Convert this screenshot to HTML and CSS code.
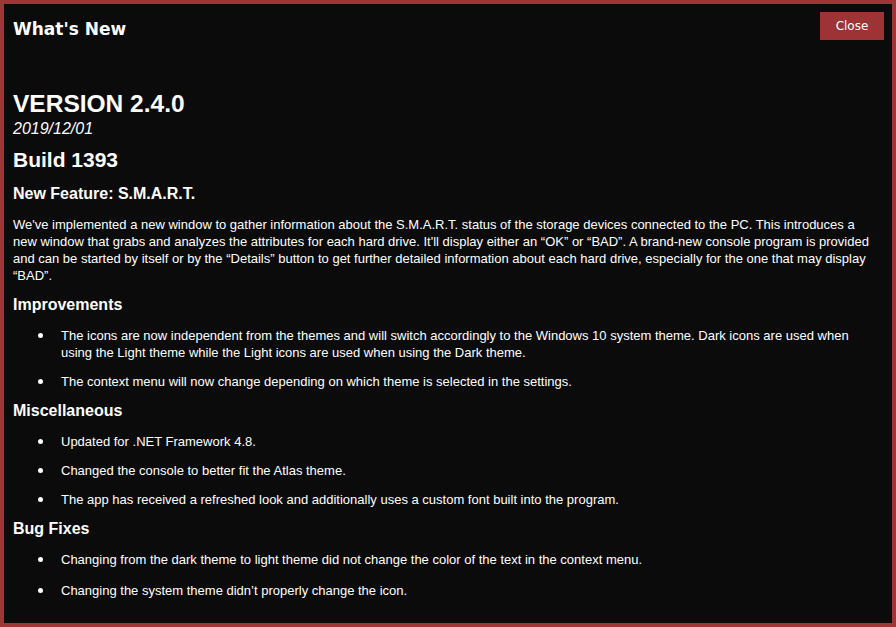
FILE: index.html
```html
<!DOCTYPE html>
<html lang="en">
    <head>
        <title>What's New</title>
        <link rel="stylesheet" href="styles.css">
    </head>
    <body>
        <div id="window">
            <div class="header">
                <h1 class="title">What's New</h1>
                <button class="close">Close</button>
            </div>

            <div id="notes">
                <h2 class="version">VERSION 2.4.0</h2>
                <div class="date">2019/12/01</div>
                <h3 class="build">Build 1393</h3>

                <h4 class="feature">New Feature: S.M.A.R.T.</h4>
                <p>We've implemented a new window to gather information about the S.M.A.R.T. status of the storage devices connected to the PC. This introduces a new window that grabs and analyzes the attributes for each hard drive. It'll display either an &ldquo;OK&rdquo; or &ldquo;BAD&rdquo;. A brand-new console program is provided and can be started by itself or by the &ldquo;Details&rdquo; button to get further detailed information about each hard drive, especially for the one that may display &ldquo;BAD&rdquo;.</p>

                <h4>Improvements</h4>
                <ul>
                    <li>The icons are now independent from the themes and will switch accordingly to the Windows 10 system theme. Dark icons are used when using the Light theme while the Light icons are used when using the Dark theme.</li>
                    <li>The context menu will now change depending on which theme is selected in the settings.</li>
                </ul>

                <h4>Miscellaneous</h4>
                <ul>
                    <li>Updated for .NET Framework 4.8.</li>
                    <li>Changed the console to better fit the Atlas theme.</li>
                    <li>The app has received a refreshed look and additionally uses a custom font built into the program.</li>
                </ul>

                <h4>Bug Fixes</h4>
                <ul class="fixes">
                    <li>Changing from the dark theme to light theme did not change the color of the text in the context menu.</li>
                    <li>Changing the system theme didn&rsquo;t properly change the icon.</li>
                </ul>
            </div>
        </div>
    </body>
</html>
```

FILE: styles.css
```css
html, body{
    margin:0;
    background-color:#0b0b0b;
}
body{
    font-family:"Liberation Sans", Arial, sans-serif;
    color:#ffffff;
}
#window{
    width:896px;
    height:627px;
    box-sizing:border-box;
    border:4px solid #9f3537;
    background-color:#0b0b0b;
    overflow:hidden;
}
.header{
    display:flex;
    justify-content:space-between;
    align-items:flex-start;
    padding:8px 8px 0 9px;
}
.title{
    font-family:"DejaVu Sans", Verdana, sans-serif;
    font-size:17px;
    line-height:22px;
    font-weight:bold;
    margin:6px 0 0 0;
}
.close{
    width:64px;
    height:28px;
    border:none;
    padding:0;
    background-color:#9d3335;
    color:#ffffff;
    font-family:"DejaVu Sans", Verdana, sans-serif;
    font-size:12px;
}
#notes{
    padding:50px 13px 0 9px;
}
.version{
    font-size:24.5px;
    line-height:28px;
    font-weight:bold;
    margin:0;
}
.date{
    font-size:16px;
    line-height:18px;
    font-style:italic;
    margin-top:2px;
}
.build{
    font-size:21px;
    line-height:24px;
    font-weight:bold;
    margin:10px 0 0 0;
}
h4{
    font-size:16px;
    line-height:22px;
    font-weight:bold;
    margin:10px 0 0 0;
}
h4.feature{
    margin-top:11px;
}
p{
    font-size:13px;
    line-height:17px;
    margin:11px 0 0 0;
}
ul{
    list-style-type:none;
    margin:0;
    padding:0;
}
li{
    display:flex;
    font-size:13px;
    line-height:17px;
    margin-top:12px;
}
ul li:first-child{
    margin-top:11px;
}
.fixes li:last-child{
    margin-top:14px;
}
li::before{
    content:"";
    flex-shrink:0;
    width:5px;
    height:5px;
    border-radius:50%;
    background-color:#ffffff;
    margin:6px 18px 0 25px;
}
```
